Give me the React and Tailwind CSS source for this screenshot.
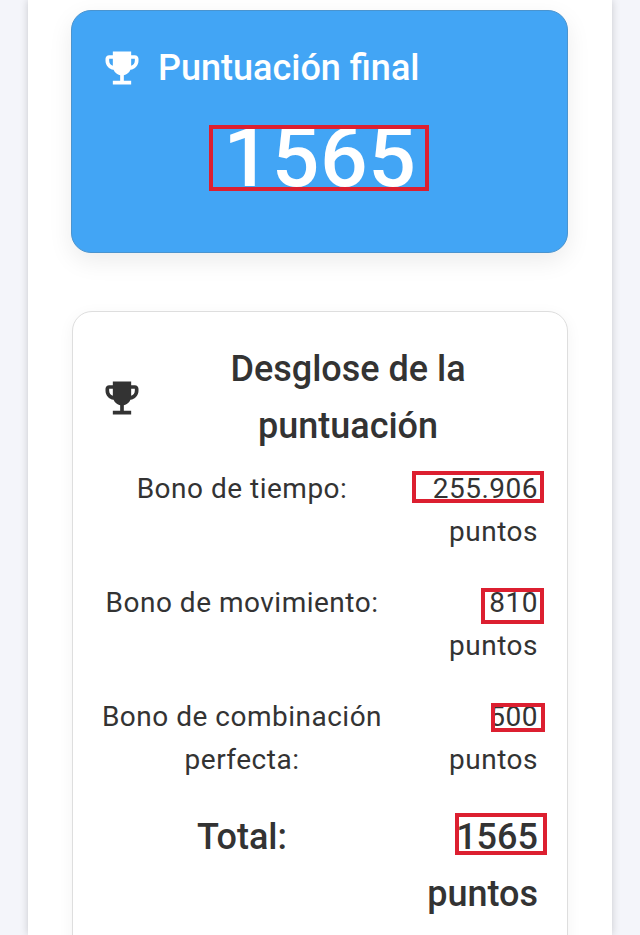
import React from 'react';

const TROPHY =
  'M19 5h-2V3H7v2H5c-1.1 0-2 .9-2 2v1c0 2.55 1.92 4.63 4.39 4.94.63 1.5 1.98 2.63 3.61 2.96V19H7v2h10v-2h-4v-3.1c1.63-.33 2.98-1.46 3.61-2.96C19.08 12.63 21 10.55 21 8V7c0-1.1-.9-2-2-2zM5 8V7h2v3.82C5.84 10.4 5 9.3 5 8zm14 0c0 1.3-.84 2.4-2 2.82V7h2v1z';

function Trophy({ className }) {
  return (
    <svg viewBox="0 0 24 24" className={className} fill="currentColor" aria-hidden>
      <path d={TROPHY} />
    </svg>
  );
}

// red highlight drawn over a number
function Marked({ children, box }) {
  return (
    <span className="relative inline-block">
      {children}
      <span className={`absolute border-4 border-[#dc1f30] ${box}`} />
    </span>
  );
}

const rows = [
  {
    label: 'Bono de tiempo:',
    value: '255.906',
    box: 'left-[-21px] right-[-6px] top-[4px] bottom-[7px]',
  },
  {
    label: 'Bono de movimiento:',
    value: '810',
    box: 'left-[-8px] right-[-6px] top-[7px] bottom-[0px]',
  },
  {
    label: 'Bono de combinación perfecta:',
    value: '500',
    box: 'left-[2px] right-[-7px] top-[8px] bottom-[6px]',
  },
];

export default function App() {
  return (
    <div className="h-[935px] overflow-hidden bg-[#f4f5fa] px-[28px] font-['Roboto',sans-serif] text-[#333333]">
      <div className="h-full bg-white pl-[43px] pr-[44px] pt-[10px] shadow-[0_0_8px_rgba(0,0,0,0.18)]">
        <div className="h-[243px] rounded-[20px] border border-[#4a94cf] bg-[#42a5f5] pl-[28px] pr-[30px] pt-[35px] text-white shadow-[0_8px_24px_rgba(0,0,0,0.08)]">
          <div className="flex items-center gap-[14px]">
            <Trophy className="h-[44px] w-[44px] shrink-0" />
            <h2 className="text-[36px] font-medium leading-[44px]">Puntuación final</h2>
          </div>
          <div className="mt-[30px] pl-[3px] text-center text-[84px] font-medium leading-[76px] tracking-[0.6px]">
            <Marked box="left-[-14px] right-[-12px] top-[5px] bottom-[5px]">1565</Marked>
          </div>
        </div>

        <div className="ml-[1px] mt-[58px] h-[700px] rounded-[20px] border border-[#dedede] bg-white pl-[27px] pr-[29px] pt-[29px] shadow-[0_4px_16px_rgba(0,0,0,0.05)]">
          <div className="flex items-center gap-[14px]">
            <Trophy className="h-[44px] w-[44px] shrink-0" />
            <h3 className="flex-1 text-center text-[36px] font-medium leading-[57px]">
              Desglose de la puntuación
            </h3>
          </div>

          <div className="mt-[12px] flex flex-col gap-[28px] text-[28px] leading-[43px] tracking-[0.5px]">
            {rows.map((row) => (
              <div key={row.label} className="grid grid-cols-[284px_1fr]">
                <div className="text-center">{row.label}</div>
                <div className="flex flex-col items-end">
                  <Marked box={row.box}>{row.value}</Marked>
                  <span>puntos</span>
                </div>
              </div>
            ))}
            <div className="grid grid-cols-[284px_1fr] text-[36px] font-medium leading-[57px] tracking-normal">
              <div className="text-center">Total:</div>
              <div className="flex flex-col items-end">
                <Marked box="left-[-1px] right-[-9px] top-[4px] bottom-[11px]">1565</Marked>
                <span>puntos</span>
              </div>
            </div>
          </div>
        </div>
      </div>
    </div>
  );
}
